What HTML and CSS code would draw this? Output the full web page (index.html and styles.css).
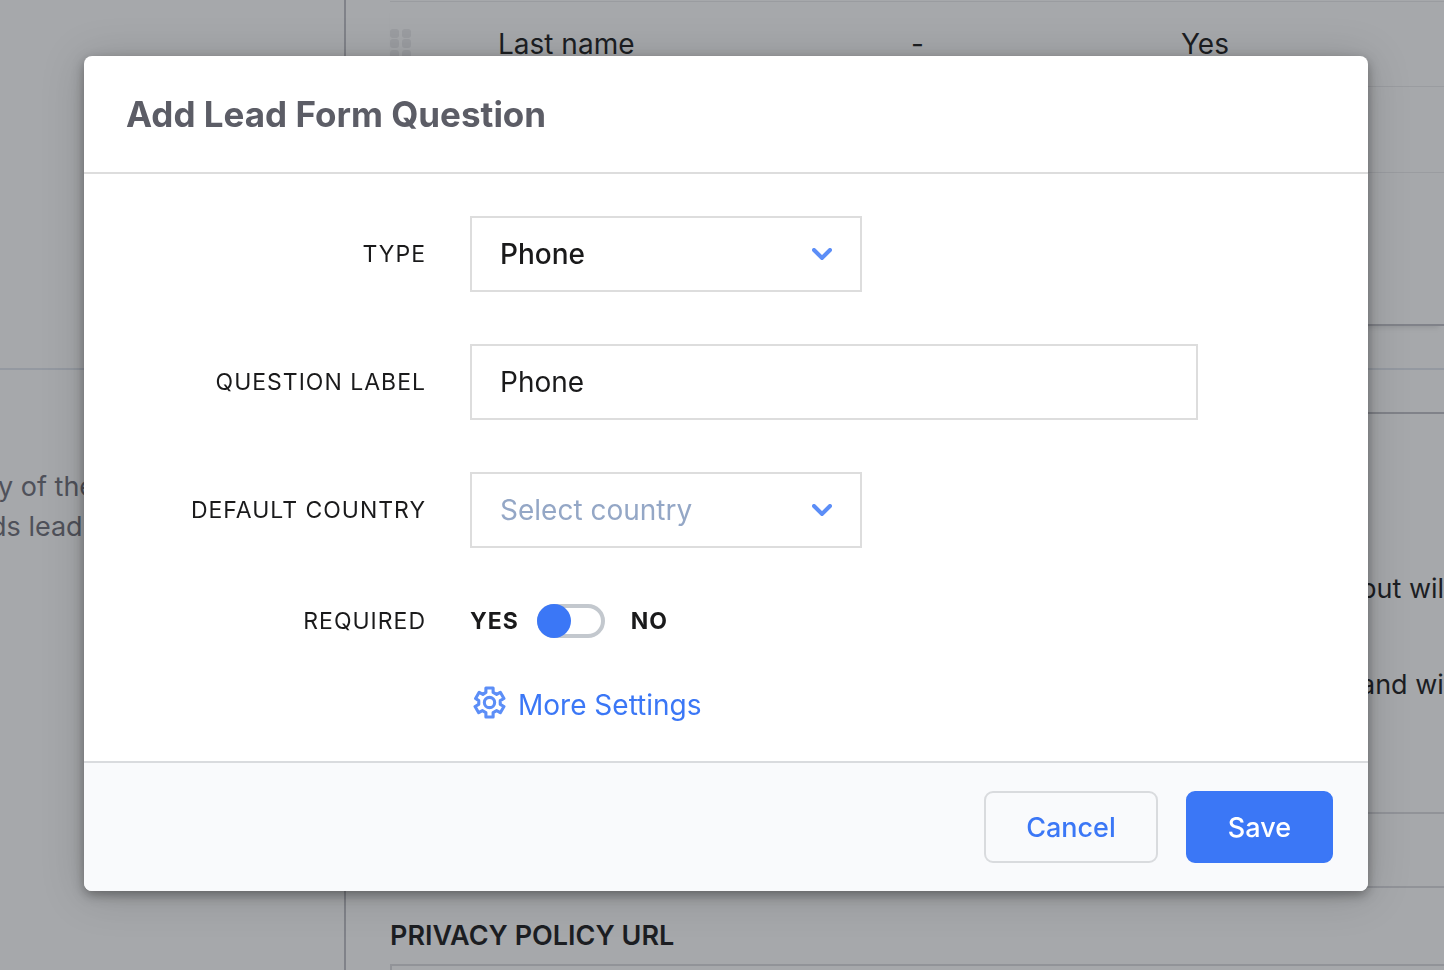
FILE: index.html
```html
<!DOCTYPE html>
<html lang="en">
<head>
<meta charset="utf-8">
<meta name="viewport" content="width=device-width, initial-scale=1">
<title>Add Lead Form Question</title>
<link rel="stylesheet" href="styles.css">
</head>
<body>
<main class="page">
  <section class="section section-fields">
    <div class="aside"></div>
    <div class="content">
      <table class="fields">
        <tbody>
          <tr>
            <td class="cell-handle">
              <svg class="handle" viewBox="0 0 22 30" aria-hidden="true">
                <rect x="0" y="0" width="9" height="9" rx="3"/><rect x="12" y="0" width="9" height="9" rx="3"/>
                <rect x="0" y="10" width="9" height="9" rx="3"/><rect x="12" y="10" width="9" height="9" rx="3"/>
                <rect x="0" y="21" width="9" height="9" rx="3"/><rect x="12" y="21" width="9" height="9" rx="3"/>
              </svg>
            </td>
            <td class="cell-name">Last name</td>
            <td class="cell-value">-</td>
            <td>Yes</td>
          </tr>
          <tr><td colspan="4"></td></tr>
        </tbody>
      </table>
    </div>
  </section>
  <section class="section section-privacy">
    <div class="aside"><p class="help">y of the<br>ds lead</p></div>
    <div class="content">
      <div class="card">
        <p class="note">but will</p>
        <p class="note">and wi</p>
      </div>
      <div class="card-footer"></div>
      <label class="url-label" for="policy-url">PRIVACY POLICY URL</label>
      <input class="url-input" id="policy-url" type="url">
    </div>
  </section>
</main>

<div class="overlay">
  <form class="modal" role="dialog" aria-modal="true" aria-labelledby="modal-title">
    <header class="modal-header"><h1 class="modal-title" id="modal-title">Add Lead Form Question</h1></header>
    <div class="modal-body">
      <div class="row">
        <label class="label" for="type">TYPE</label>
        <div class="select-wrap">
          <select class="field select" id="type"><option>Phone</option></select>
          <svg class="chevron" viewBox="0 0 20 12" aria-hidden="true"><path d="M2 2l8 8 8-8"/></svg>
        </div>
      </div>
      <div class="row">
        <label class="label" for="question">QUESTION LABEL</label>
        <input class="field input" id="question" type="text" value="Phone">
      </div>
      <div class="row">
        <label class="label" for="country">DEFAULT COUNTRY</label>
        <div class="select-wrap">
          <select class="field select select-empty" id="country"><option>Select country</option></select>
          <svg class="chevron" viewBox="0 0 20 12" aria-hidden="true"><path d="M2 2l8 8 8-8"/></svg>
        </div>
      </div>
      <div class="row row-short">
        <label class="label" for="required">REQUIRED</label>
        <div class="toggle">
          <span>YES</span>
          <input class="switch" id="required" type="checkbox" role="switch" checked>
          <span>NO</span>
        </div>
      </div>
      <div class="row row-more">
        <a class="more" href="#more">
          <svg class="gear" viewBox="0 0 32 32" aria-hidden="true">
            <path d="M12.500 2h7v4.200l3.400 1.900 3.600-2 3.500 6-3.600 2.100v3.600l3.600 2.100-3.500 6-3.600-2-3.400 1.900V30h-7v-4.200l-3.400-1.900-3.600 2-3.500-6 3.600-2.100v-3.600L2.500 12.100l3.500-6 3.600 2 2.900-1.900z"/>
            <circle cx="16" cy="16" r="5"/>
          </svg>
          <span>More Settings</span>
        </a>
      </div>
    </div>
    <footer class="modal-footer">
      <button class="button button-cancel" type="button">Cancel</button>
      <button class="button button-save" type="submit">Save</button>
    </footer>
  </form>
</div>
</body>
</html>
```
FILE: styles.css
```css
* { box-sizing: border-box; }

body {
  margin: 0;
  height: 100vh;
  overflow: hidden;
  background: #fff;
  color: #1a1a1b;
  font-family: Inter, "Liberation Sans", sans-serif;
  font-size: 28px;
}

/* Settings page */
.page { height: 100vh; overflow: hidden; }
.section { display: grid; grid-template-columns: 346px 1fr; }
.section-fields { height: 370px; border-bottom: 2px solid #e1e6ee; }
.section-privacy { height: 800px; }
.aside { border-right: 2px solid #c0c0c6; }
.content { padding-left: 44px; }
.section-fields .content { padding-top: 1px; }

.fields {
  width: 100%;
  height: 325px;
  border-collapse: collapse;
  table-layout: fixed;
  border-bottom: 2px solid #c0c0c6;
  box-shadow: 0 6px 6px -5px rgba(0, 0, 0, .15);
}
.fields tr { height: 85px; border-top: 1px solid #ebebed; }
.fields tr:last-child { height: auto; background: linear-gradient(#ebebed, #ebebed) 0 84px / 100% 1px no-repeat; }
.fields td { padding: 0; vertical-align: middle; }
.cell-handle { width: 108px; }
.cell-name { width: 413px; }
.cell-value { width: 270px; }
.handle { display: block; width: 22px; height: 30px; fill: #ececee; }

.help { margin: 97px 0 0 -10px; color: #6f6f78; font-size: 27px; line-height: 40px; text-indent: 8px; white-space: nowrap; }
.card { height: 402px; margin-top: 42px; padding-top: 155px; border-top: 2px solid #c0c0c6; border-bottom: 2px solid #dcdce0; }
.note { margin: 0 0 56px; padding-left: 970px; font-size: 27px; line-height: 40px; white-space: nowrap; }
.card-footer { height: 74px; border-bottom: 2px solid #dcdce0; }
.url-label { display: block; margin-top: 28px; font-size: 27px; font-weight: 600; line-height: 40px; }
.url-input { display: block; width: 100%; height: 76px; margin-top: 8px; border: 2px solid #dcdce0; border-radius: 0; }

/* Dialog */
.overlay {
  position: fixed;
  inset: 0;
  padding: 56px 76px 56px 84px;
  background: rgba(33, 38, 45, .4);
}
.modal {
  overflow: hidden;
  border-radius: 8px;
  background: #fff;
  box-shadow: 0 4px 12px rgba(0, 0, 0, .35), 0 4px 44px rgba(0, 0, 0, .18);
}
.modal-header { padding: 34px 42px; border-bottom: 2px solid #ddd; }
.modal-title { margin: 0; color: #5c5d66; font-size: 35px; font-weight: 700; line-height: 48px; }
.modal-body { display: grid; gap: 52px; padding: 42px 0 35px; }
.row { display: grid; grid-template-columns: 342px 1fr; gap: 44px; align-items: center; }
.row-short { min-height: 42px; }
.row-more { margin-top: -10px; }
.label { padding-bottom: 1px; font-size: 23px; letter-spacing: 1px; text-align: right; }
.field {
  display: block;
  width: 100%;
  height: 76px;
  padding: 0 28px;
  border: 2px solid #ddd;
  border-radius: 0;
  background: #fff;
  color: #1a1a1b;
  font: inherit;
}
.input { max-width: 728px; }
.select-wrap { position: relative; width: 392px; }
.select { appearance: none; font-weight: 500; }
.select-empty { color: #94a7c6; font-weight: 400; }
.chevron {
  position: absolute;
  top: 32px;
  right: 30px;
  width: 20px;
  height: 12px;
  fill: none;
  stroke: #5c8ef7;
  stroke-width: 4;
  stroke-linecap: round;
  pointer-events: none;
}
.toggle { display: flex; align-items: center; gap: 18px; font-size: 23px; font-weight: 700; letter-spacing: 1px; }
.switch {
  appearance: none;
  width: 68px;
  height: 34px;
  margin: 0 8px 0 0;
  border: 4px solid #c3c8ce;
  border-radius: 17px;
  background: #fff;
}
.switch::before {
  content: "";
  display: block;
  width: 34px;
  height: 34px;
  margin: -4px;
  border-radius: 50%;
  background: #3b77f6;
}
.more { grid-column: 2; display: flex; align-items: center; gap: 12px; padding-left: 3px; color: #3b77f6; line-height: 42px; text-decoration: none; }
.gear { width: 33px; height: 33px; margin-bottom: 6px; fill: none; stroke: #5c8ef7; stroke-width: 3; stroke-linejoin: round; }
.modal-footer { display: flex; justify-content: flex-end; gap: 28px; padding: 28px 35px; border-top: 2px solid #d9dbde; background: #f9fafc; }
.button { height: 72px; padding: 0 40px; border: 2px solid #d9dbde; border-radius: 9px; background: transparent; color: #3b77f6; font: inherit; font-size: 27px; font-weight: 500; }
.button-save { border-color: #3b77f6; background: #3b77f6; color: #fff; }
```
